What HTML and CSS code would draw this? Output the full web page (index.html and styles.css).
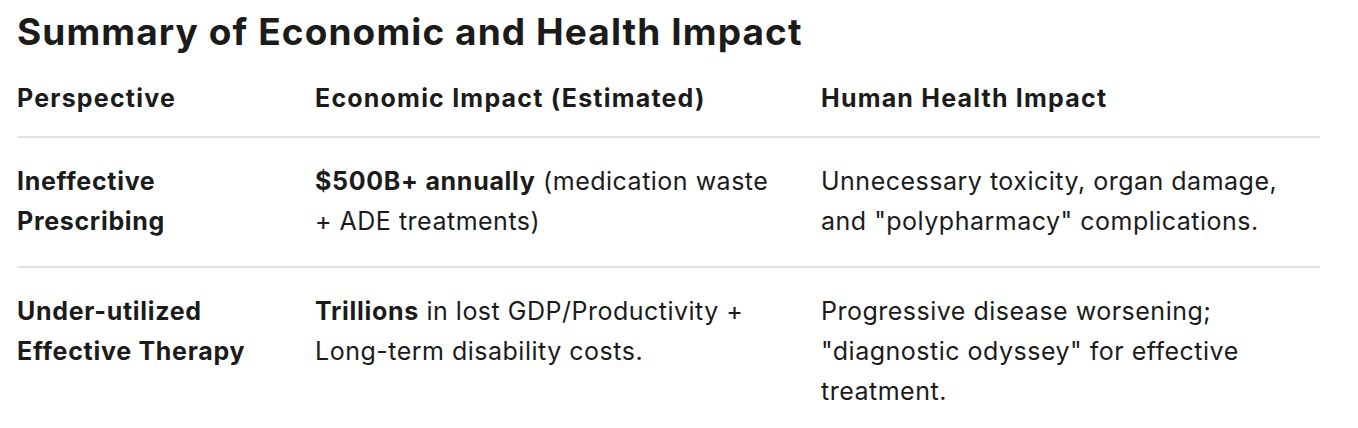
FILE: index.html
```html
<!DOCTYPE html>
<html lang="en">
<head>
<meta charset="utf-8">
<title>Summary of Economic and Health Impact</title>
<link rel="stylesheet" href="styles.css">
</head>
<body>
<main class="page">
  <h1 class="title">Summary of Economic and Health Impact</h1>
  <table class="impact">
    <colgroup>
      <col class="c1"><col class="c2"><col class="c3">
    </colgroup>
    <thead>
      <tr>
        <th>Perspective</th>
        <th>Economic Impact (Estimated)</th>
        <th>Human Health Impact</th>
      </tr>
    </thead>
    <tbody>
      <tr>
        <td class="label">Ineffective Prescribing</td>
        <td class="econ"><strong>$500B+ annually</strong> (medication waste + ADE treatments)</td>
        <td>Unnecessary toxicity, organ damage, and "polypharmacy" complications.</td>
      </tr>
      <tr>
        <td class="label">Under-utilized Effective Therapy</td>
        <td class="econ"><strong>Trillions</strong> in lost GDP/Productivity + Long-term disability costs.</td>
        <td>Progressive disease worsening; "diagnostic odyssey" for effective treatment.</td>
      </tr>
    </tbody>
  </table>
</main>
</body>
</html>
```
FILE: styles.css
```css
html, body {
  margin: 0;
  padding: 0;
  background: #ffffff;
}
body {
  font-family: "Google Sans", Inter, Roboto, "DejaVu Sans", sans-serif;
  color: #1b1b1c;
}
.page {
  padding: 10px 0 0 17px;
}
.title {
  margin: 0;
  font-size: 37px;
  line-height: 44px;
  font-weight: 700;
  letter-spacing: 1.1px;
}
.impact {
  margin-top: 24px;
  width: 1303px;
  border-collapse: collapse;
  table-layout: fixed;
  font-size: 25px;
  line-height: 40px;
  letter-spacing: 0.5px;
}
.c1 { width: 298px; }
.c2 { width: 506px; }
.c3 { width: 499px; }
.impact th {
  text-align: left;
  font-weight: 700;
  letter-spacing: 1.2px;
  padding: 0 24px 18px 0;
  border-bottom: 2px solid #e1e1e7;
  vertical-align: top;
}
.impact td {
  padding: 23px 24px 25px 0;
  vertical-align: top;
}
.impact td.econ {
  padding-right: 36px;
}
.impact tbody tr:first-child td {
  border-bottom: 2px solid #e1e1e7;
}
.impact td.label,
.impact strong {
  font-weight: 700;
  letter-spacing: 0.7px;
}
```
